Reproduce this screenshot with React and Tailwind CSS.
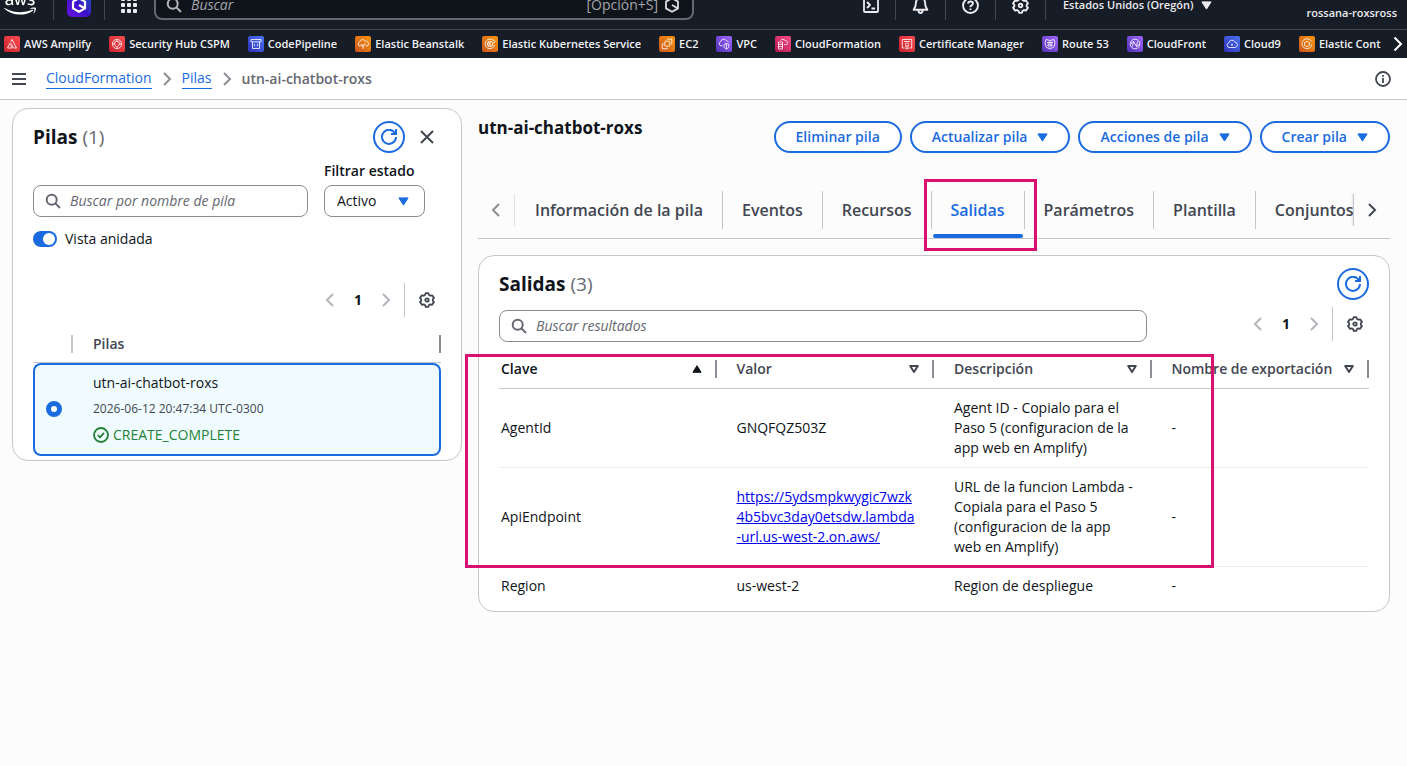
import React from "react";
import { FaAws } from "react-icons/fa";

function Svg({ children, className = "size-4", width = 2, box = "0 0 16 16" }) {
  return (
    <svg
      viewBox={box}
      className={className + " shrink-0"}
      fill="none"
      stroke="currentColor"
      strokeWidth={width}
      strokeLinejoin="round"
      aria-hidden="true"
    >
      {children}
    </svg>
  );
}

const SearchIcon = ({ className }) => (
  <Svg className={className}>
    <circle cx="6.7" cy="6.7" r="5" />
    <path d="m10.4 10.4 4.6 4.6" />
  </Svg>
);

const RefreshIcon = () => (
  <Svg className="size-4">
    <path d="M10 5h5V0" strokeLinejoin="miter" />
    <path d="M15 8a7 7 0 1 1-.7-3.2" />
  </Svg>
);

const ChevronLeft = ({ className }) => (
  <Svg className={className}>
    <path d="M11 2 5 8l6 6" strokeLinejoin="miter" />
  </Svg>
);

const ChevronRight = ({ className }) => (
  <Svg className={className}>
    <path d="m5 2 6 6-6 6" strokeLinejoin="miter" />
  </Svg>
);

const HexagonIcon = ({ width }) => (
  <Svg width={width}>
    <path d="M8 1.200 14 4.600v6.800L8 14.800 2 11.400V4.600z" />
    <path d="m8 8 5.500 3.200" />
  </Svg>
);

const GearIcon = ({ className }) => (
  <Svg className={className} width={1.8}>
    <path d="M6.700 1.100h2.600l.5 1.700 1.500.9 1.800-.4 1.900 2.600-1.200 1.400v1.500l1.200 1.300-1.900 2.700-1.800-.5-1.500.9-.5 1.700H6.700l-.5-1.700-1.500-.9-1.800.5L1 10.100l1.200-1.300V7.300L1 5.900l1.900-2.600 1.800.4 1.500-.9z" />
    <circle cx="8" cy="8" r="1.700" />
  </Svg>
);

const CaretDown = () => (
  <svg viewBox="0 0 11 9" className="h-[9px] w-[11px] shrink-0" aria-hidden="true">
    <path d="M.9.900h9.200L5.500 8.100z" fill="currentColor" stroke="currentColor" strokeLinejoin="round" />
  </svg>
);

const SortDown = () => (
  <svg viewBox="0 0 10 8" className="h-2 w-[10px] shrink-0" aria-hidden="true">
    <path d="M1.200 1h7.600L5 7z" fill="none" stroke="currentColor" strokeWidth="2" strokeLinejoin="round" />
  </svg>
);

const SortUp = () => (
  <svg viewBox="0 0 10 8" className="h-2 w-[10px] shrink-0" aria-hidden="true">
    <path d="M.9 7.300h8.200L5 .7z" fill="currentColor" stroke="currentColor" strokeLinejoin="round" />
  </svg>
);

const red = "from-[#c8212c] to-[#fc4b52]";
const blue = "from-[#2f2fb5] to-[#4d74f7]";
const orange = "from-[#c9551b] to-[#fb9505]";
const purple = "from-[#5330b4] to-[#a166ff]";
const pink = "from-[#b3124f] to-[#fb4b87]";

const services = [
  { name: "AWS Amplify", color: red, art: <><path d="M8 3.500 12.500 12h-3L7 7.200" /><path d="M6.300 6.500 3.500 12h4.700L6.300 8.500M8 3.500 6.800 5.600" /></> },
  { name: "Security Hub CSPM", color: red, art: <><circle cx="8" cy="8" r="4.600" /><path d="M8 5.200 10.200 6v2c0 1.500-1 2.300-2.200 3-1.200-.7-2.200-1.500-2.200-3V6zM3.500 8h2M10.500 8h2M8 3.500v1.500M8 11v1.500" /></> },
  { name: "CodePipeline", color: blue, art: <><path d="M3 3.500h10v2.400H3zM4.500 5.900V12.500h7V5.900" /><path d="m7 8-1 1.200 1 1.200M9 8l1 1.200-1 1.200" /></> },
  { name: "Elastic Beanstalk", color: orange, art: <><path d="M5.500 10.200H5A2.200 2.200 0 0 1 4.700 6a3 3 0 0 1 5.600-.8A2.500 2.500 0 0 1 11.500 10.200h-1" /><path d="M8 12.800V8M8 11 6 9.200V8M8 10l2-1.500V7.200" /></> },
  { name: "Elastic Kubernetes Service", color: orange, art: <><path d="M11.800 5A4.800 4.800 0 1 0 12.600 9" /><circle cx="8" cy="8" r="2.700" /><path d="M7 6v4M7 8.200 9.200 6M7.800 7.800 9.200 10M11 3.500l2 2-1.500 2" /></> },
  { name: "EC2", color: orange, art: <><rect x="5.800" y="5.200" width="5" height="5" rx=".8" /><path d="M8.200 3.200h4.600v4.600M3.200 8v4.800h5v-1.200M3.200 8h1.500M12.800 7.800h-1" /></> },
  { name: "VPC", color: purple, art: <><path d="M6.500 9.800H5A2.200 2.200 0 0 1 4.700 5.600a3 3 0 0 1 5.600-.8c1 0 1.800.6 2.100 1.500" /><path d="m10.400 7.500 2.300.8v2.200c0 1.200-1 2-2.300 2.600-1.300-.6-2.300-1.400-2.300-2.600V8.300zM10.400 7.500v5.600" /></> },
  { name: "CloudFormation", color: pink, art: <><path d="M3.500 6h4v7h-4zM3.500 8.300h4M3.500 10.600h4" /><path d="M5.500 4.500c1-1.500 3.800-1.500 4.700.2 3 0 3.300 3.800.6 4H9" /></> },
  { name: "Certificate Manager", color: red, art: <><path d="M5.500 12H3.300V3.500h9.400V12h-2.200M5 5.500h6" /><circle cx="8" cy="8.500" r="1.600" /><path d="M7 10v3l1-.7 1 .7v-3" /></> },
  { name: "Route 53", color: purple, art: <><path d="m4 3.500 4 1 4-1 1 3.500-1 4-4 2-4-2-1-4z" /><path d="M5 6.500h6M5 9h6M7 5.500v6M9 5.500v6" /></> },
  { name: "CloudFront", color: purple, art: <><circle cx="8" cy="8" r="4.800" /><path d="m5.500 10.500 1-5 3 5 1-5M3.500 8l3-2.500M9.500 10.500l3-2" /></> },
  { name: "Cloud9", color: blue, art: <><path d="M5 11.500A2.300 2.300 0 0 1 4.800 7a3.200 3.200 0 0 1 6-1 2.800 2.800 0 0 1 .5 5.500z" /><path d="M8 9.500V7.800M7 8.800h2" /></> },
  { name: "Elastic Cont", color: orange, art: <><path d="M11 3.800A5 5 0 1 0 12.900 8" /><path d="m8 5.300 2.400 1.300v2.800L8 10.700 5.600 9.400V6.600zM11 3.500l1.800 2" /></> },
];

const stackTabs = ["Información de la pila", "Eventos", "Recursos", "Salidas", "Parámetros", "Plantilla", "Conjuntos de cambios"];

const NavDivider = () => <span className="h-[30px] w-px shrink-0 bg-[#424650]" />;

function TopBar() {
  return (
    <div className="flex h-[30px] items-end overflow-hidden border-b border-[#424650]">
      <div className="flex h-12 w-full shrink-0 items-center text-[#ebebf0]">
        <a href="#inicio" aria-label="AWS" className="ml-1 flex w-[49px] text-white">
          <FaAws className="h-[26px] w-8" />
        </a>
        <NavDivider />
        <button type="button" aria-label="Amazon Q" className="mx-[13px] flex size-6 shrink-0 items-center justify-center rounded-[5px] bg-linear-to-tr from-[#6a0ee0] via-[#3a12c8] to-[#0a4fb0] text-white">
          <HexagonIcon width={2.2} />
        </button>
        <NavDivider />
        <button type="button" aria-label="Servicios" className="mr-[17px] ml-4 grid size-4 shrink-0 grid-cols-3 gap-[2px]">
          {Array.from({ length: 9 }, (_, i) => (
            <span key={i} className="size-1 rounded-[1px] bg-[#ebebf0]" />
          ))}
        </button>
        <div className="flex h-[30px] w-[540px] shrink-0 items-center rounded-lg border-2 border-[#656871] bg-[#0f141a] pr-3 pl-[10px]">
          <SearchIcon className="size-4 text-[#b4b4bb]" />
          <input aria-label="Buscar" placeholder="Buscar" className="ml-[9px] min-w-0 flex-1 bg-transparent text-[14px] leading-5 italic outline-none placeholder:text-[#a4a4ad]" />
          <span className="mr-[6px] text-[14px] leading-5 text-[#a4a4ad]">[Opción+S]</span>
          <span className="text-[#dedee3]"><HexagonIcon width={1.8} /></span>
        </div>
        <div className="ml-auto flex items-center">
          <button type="button" aria-label="CloudShell" className="mx-4">
            <Svg width={1.8}>
              <rect x="1" y="1" width="14" height="14" rx="1" />
              <path d="m4 5 3 3-3 3M8.500 11.500H12" />
            </Svg>
          </button>
          <NavDivider />
          <button type="button" aria-label="Notificaciones" className="mx-4">
            <Svg width={1.8} className="size-[17px]">
              <path d="M8 1a4.300 4.300 0 0 1 4.300 4.300c0 3 .9 5 2.200 6.700h-13c1.300-1.700 2.200-3.700 2.200-6.700A4.300 4.300 0 0 1 8 1z" />
              <path d="M6 12.500c0 1.500.8 2.500 2 2.500s2-1 2-2.500" />
            </Svg>
          </button>
          <NavDivider />
          <button type="button" aria-label="Ayuda" className="mx-4">
            <Svg width={1.8} className="size-[17px]">
              <circle cx="8" cy="8" r="7" />
              <path d="M5.700 6.200C5.800 4.900 6.700 4.200 8 4.200s2.300.8 2.300 2S9.400 7.700 8 8.600v1M8 10.800v1.500" />
            </Svg>
          </button>
          <NavDivider />
          <button type="button" aria-label="Configuración" className="mx-4">
            <GearIcon className="size-[17px]" />
          </button>
          <NavDivider />
          <button type="button" className="ml-[17px] flex items-center gap-2 text-[11px] leading-4 font-semibold whitespace-nowrap">
            Estados Unidos (Oregón)
            <CaretDown />
          </button>
          <button type="button" className="mr-[10px] ml-[94px] pt-4 text-[11px] leading-4 font-semibold whitespace-nowrap">
            rossana-roxsross
          </button>
        </div>
      </div>
    </div>
  );
}

function FavoritesBar() {
  return (
    <nav aria-label="Favoritos" className="flex h-7 items-center pr-1 pl-1">
      <ul className="flex min-w-0 flex-1 gap-[18px] overflow-hidden">
        {services.map((s) => (
          <li key={s.name} className="shrink-0">
            <a href="#servicio" className="flex items-center gap-1 text-[11px] leading-4 font-semibold whitespace-nowrap text-[#f3f3f7]">
              <span className={"flex size-4 items-center justify-center rounded-[2px] bg-linear-to-tr text-white/90 " + s.color}>
                <Svg width={0.9}>{s.art}</Svg>
              </span>
              {s.name}
            </a>
          </li>
        ))}
      </ul>
      <button type="button" aria-label="Más favoritos" className="text-white">
        <Svg className="h-4 w-[10px]" box="3 0 10 16">
          <path d="m4.500 1.500 6.500 6.500-6.500 6.500" strokeLinejoin="miter" />
        </Svg>
      </button>
    </nav>
  );
}

function Breadcrumbs() {
  return (
    <div className="flex h-[42px] items-center border-b border-[#c6c6cd] bg-white px-[11px] text-[14px] leading-5">
      <button type="button" aria-label="Abrir navegación" className="mr-[19px] text-[#424650]">
        <Svg>
          <path d="M1 3h14M1 8h14M1 13h14" />
        </Svg>
      </button>
      <ol className="flex items-center gap-[7px]">
        <li><a href="#cloudformation" className="block border-b border-[#1a6be0] text-[#1a6be0]">CloudFormation</a></li>
        <li aria-hidden="true" className="text-[#8c8c94]"><ChevronRight /></li>
        <li><a href="#pilas" className="block border-b border-[#1a6be0] text-[#1a6be0]">Pilas</a></li>
        <li aria-hidden="true" className="text-[#8c8c94]"><ChevronRight /></li>
        <li className="font-semibold text-[#656871]">utn-ai-chatbot-roxs</li>
      </ol>
      <button type="button" aria-label="Información" className="ml-auto mr-[5px] text-[#424650]">
        <Svg width={1.8}>
          <circle cx="8" cy="8" r="7" />
          <path d="M8 7v5M8 4v1.800" />
        </Svg>
      </button>
    </div>
  );
}

function RefreshButton() {
  return (
    <button type="button" aria-label="Actualizar" className="flex size-8 shrink-0 items-center justify-center rounded-full border-2 border-[#1a6be0] bg-white text-[#1a6be0]">
      <RefreshIcon />
    </button>
  );
}

function Pager() {
  return (
    <div className="flex items-center">
      <div className="flex items-center leading-5">
        <button type="button" aria-label="Página anterior" className="text-[#b4b4bb]"><ChevronLeft /></button>
        <button type="button" aria-current="page" className="w-10 text-center text-[14px] font-bold text-[#0f141a]">1</button>
        <button type="button" aria-label="Página siguiente" className="text-[#b4b4bb]"><ChevronRight /></button>
      </div>
      <span className="ml-[10px] h-[34px] w-px bg-[#c6c6cd]" />
      <button type="button" aria-label="Preferencias" className="mr-[6px] ml-[14px] text-[#424650]">
        <GearIcon className="size-4" />
      </button>
    </div>
  );
}

function SearchBox({ label, className }) {
  return (
    <div className={"flex h-8 items-center rounded-lg border border-[#8c8c94] bg-white pr-3 pl-[11px] " + className}>
      <SearchIcon className="size-4 text-[#656871]" />
      <input aria-label={label} placeholder={label} className="ml-[9px] min-w-0 flex-1 bg-transparent text-[14px] leading-5 italic outline-none placeholder:text-[#656871]" />
    </div>
  );
}

function StacksPanel() {
  return (
    <section className="w-[450px] shrink-0 rounded-2xl border border-[#c6c6cd] bg-white px-5 pt-3 pb-1">
      <div className="flex items-center">
        <h2 className="text-[19px] leading-6 font-bold">
          Pilas <span className="font-normal text-[#656871]">(1)</span>
        </h2>
        <div className="ml-auto flex items-center gap-[14px] pr-[6px]">
          <RefreshButton />
          <button type="button" aria-label="Cerrar" className="text-[#424650]">
            <Svg><path d="m2 2 12 12M14 2 2 14" /></Svg>
          </button>
        </div>
      </div>
      <div className="mt-2 flex items-end gap-4 pr-4">
        <SearchBox label="Buscar por nombre de pila" className="min-w-0 flex-1" />
        <div className="flex w-[101px] flex-col gap-1">
          <label htmlFor="estado" className="text-[14px] leading-5 font-semibold whitespace-nowrap">Filtrar estado</label>
          <div className="grid items-center">
            <select id="estado" className="col-start-1 row-start-1 h-8 appearance-none rounded-lg border border-[#8c8c94] bg-white pl-3 text-[14px] leading-5">
              <option>Activo</option>
            </select>
            <span className="pointer-events-none col-start-1 row-start-1 mr-4 justify-self-end text-[#1a6be0]"><CaretDown /></span>
          </div>
        </div>
      </div>
      <label className="mt-3 flex items-center gap-2 text-[14px] leading-5">
        <input type="checkbox" role="switch" defaultChecked className="peer sr-only" />
        <span className="flex h-4 w-6 items-center justify-end rounded-full bg-[#1a6be0] px-[2px]">
          <span className="size-3 rounded-full bg-white" />
        </span>
        Vista anidada
      </label>
      <div className="mt-[34px] flex justify-end"><Pager /></div>
      <table className="mt-2 w-full border-separate border-spacing-0 text-left">
        <thead>
          <tr className="h-[38px] text-[14px] leading-5 text-[#424650]">
            <th aria-label="Selección" className="w-10 border-b border-[#c6c6cd] p-0"><span className="ml-auto block h-[18px] w-[2px] bg-[#c6c6cd]" /></th>
            <th className="border-b border-[#c6c6cd] py-0 pr-0 pl-5 font-semibold">
              <div className="flex items-center justify-between">Pilas<span className="h-[18px] w-[2px] bg-[#8c8c94]" /></div>
            </th>
          </tr>
        </thead>
        <tbody>
          <tr className="h-[93px]">
            <td className="rounded-l-lg border-2 border-r-0 border-[#1a6be0] bg-[#f0fbff] pt-0 pr-0 pb-[2px] pl-[11px]">
              <input type="radio" name="pila" defaultChecked aria-label="utn-ai-chatbot-roxs" className="block size-4 appearance-none rounded-full border-[5px] border-[#1a6be0] bg-white" />
            </td>
            <td className="rounded-r-lg border-2 border-l-0 border-[#1a6be0] bg-[#f0fbff] pt-0 pr-0 pb-[2px] pl-5">
              <div className="flex flex-col gap-[6px] text-[14px] leading-5">
                <span>utn-ai-chatbot-roxs</span>
                <span className="text-[12px] text-[#424650]">2026-06-12 20:47:34 UTC-0300</span>
                <span className="flex items-center gap-1 text-[#1f8236]">
                  <Svg width={1.8}>
                    <circle cx="8" cy="8" r="7" />
                    <path d="m4.800 8 2.200 2.300 4-4.500" />
                  </Svg>
                  CREATE_COMPLETE
                </span>
              </div>
            </td>
          </tr>
        </tbody>
      </table>
    </section>
  );
}

function ActionButton({ children, caret }) {
  return (
    <button type="button" className="flex h-8 items-center gap-[10px] rounded-[20px] border-2 border-[#1a6be0] bg-white px-5 text-[14px] leading-5 font-semibold whitespace-nowrap text-[#1a6be0]">
      {children}
      {caret && <CaretDown />}
    </button>
  );
}

function Tabs() {
  return (
    <div className="mt-[29px] flex h-[57px] items-stretch border-b border-[#c6c6cd]">
      <button type="button" aria-label="Pestañas anteriores" className="pl-[10px] text-[#8c8c94]"><ChevronLeft className="size-4" /></button>
      <span className="ml-[10px] h-8 w-px shrink-0 self-center bg-[#dedee3]" />
      <div role="tablist" className="flex min-w-0 flex-1 overflow-x-clip pl-px">
        {stackTabs.map((tab, i) => {
          const active = tab === "Salidas";
          return (
            <div key={tab} className="relative flex shrink-0 items-center">
              <button
                type="button"
                role="tab"
                aria-selected={active}
                className={"h-full px-[19px] text-[16px] leading-5 font-semibold whitespace-nowrap " + (active ? "text-[#1a6be0]" : "text-[#424650]")}
              >
                {tab}
              </button>
              {i < stackTabs.length - 1 && <span className="h-[38px] w-px bg-[#c6c6cd]" />}
              {active && <span className="absolute right-[2px] bottom-0 left-px h-1 rounded-sm bg-[#1a6be0]" />}
              {active && <span className="pointer-events-none absolute -top-[3px] -right-3 -bottom-[13px] -left-2 z-10 border-[3px] border-[#d8106f]" />}
            </div>
          );
        })}
      </div>
      <span className="h-8 w-px shrink-0 self-center bg-[#c6c6cd] shadow-[-1px_0_2px_#dedee3]" />
      <button type="button" aria-label="Pestañas siguientes" className="pr-[10px] pl-[10px] text-[#424650]"><ChevronRight className="size-4" /></button>
    </div>
  );
}

const outputs = [
  { key: "AgentId", value: "GNQFQZ503Z", text: "Agent ID - Copialo para el Paso 5 (configuracion de la app web en Amplify)" },
  { key: "ApiEndpoint", url: "https://5ydsmpkwygic7wzk4b5bvc3day0etsdw.lambda-url.us-west-2.on.aws/", text: "URL de la funcion Lambda - Copiala para el Paso 5 (configuracion de la app web en Amplify)" },
  { key: "Region", value: "us-west-2", text: "Region de despliegue" },
];

function OutputsPanel() {
  return (
    <section className="mt-4 rounded-2xl border border-[#c6c6cd] bg-white px-5 pt-3 pb-[6px]">
      <div className="flex items-center justify-between">
        <h2 className="text-[19px] leading-6 font-bold">
          Salidas <span className="font-normal text-[#656871]">(3)</span>
        </h2>
        <RefreshButton />
      </div>
      <div className="mt-[7px] flex items-start justify-between gap-4">
        <SearchBox label="Buscar resultados" className="mt-[3px] w-[648px]" />
        <Pager />
      </div>
      <div className="relative mt-2">
        <table className="w-full table-fixed border-separate border-spacing-0 text-left text-[14px] leading-5">
          <thead>
            <tr className="h-[39px] text-[#424650]">
              {["Clave", "Valor", "Descripción", "Nombre de exportación"].map((h, i) => (
                <th key={h} className={"border-b border-[#c6c6cd] py-0 pr-0 font-semibold " + (i === 0 ? "pl-[2px] text-[#0f141a]" : "pl-5")}>
                  <div className="flex items-center">
                    <span className="min-w-0 flex-1 whitespace-nowrap">{h}</span>
                    {i === 0 ? <SortUp /> : <SortDown />}
                    <span className="ml-[13px] h-[18px] w-[2px] shrink-0 bg-[#8c8c94]" />
                  </div>
                </th>
              ))}
            </tr>
          </thead>
          <tbody>
            {outputs.map((o, i) => {
              const line = i < outputs.length - 1 ? " border-b border-[#ebebf0]" : "";
              return (
                <tr key={o.key}>
                  <td className={"py-[9px] pr-5 pl-[2px]" + line}>{o.key}</td>
                  <td className={"py-[9px] pr-[18px] pl-5 break-all" + line}>
                    {o.url ? <a href={o.url} className="text-[#0000ee] underline">{o.url}</a> : o.value}
                  </td>
                  <td className={"py-[9px] pr-4 pl-5" + line}>{o.text}</td>
                  <td className={"py-[9px] pl-5" + line}>-</td>
                </tr>
              );
            })}
          </tbody>
        </table>
        <span className="pointer-events-none absolute top-1 right-[155px] bottom-[37px] -left-[34px] border-[3px] border-[#d8106f]" />
      </div>
    </section>
  );
}

export default function App() {
  return (
    <div className="min-h-screen bg-[#fcfcfc] font-['Open_Sans','Noto_Sans',sans-serif] text-[#0f141a]">
      <header className="bg-[#161d26]">
        <TopBar />
        <FavoritesBar />
      </header>
      <Breadcrumbs />
      <main className="flex items-start gap-4 pt-2 pr-[17px] pl-3">
        <StacksPanel />
        <div className="min-w-0 flex-1 pt-2">
          <div className="flex items-start justify-between gap-4">
            <h1 className="text-[17px] leading-6 font-bold">utn-ai-chatbot-roxs</h1>
            <div className="flex gap-2 pt-[5px]">
              <ActionButton>Eliminar pila</ActionButton>
              <ActionButton caret>Actualizar pila</ActionButton>
              <ActionButton caret>Acciones de pila</ActionButton>
              <ActionButton caret>Crear pila</ActionButton>
            </div>
          </div>
          <Tabs />
          <OutputsPanel />
        </div>
      </main>
    </div>
  );
}
